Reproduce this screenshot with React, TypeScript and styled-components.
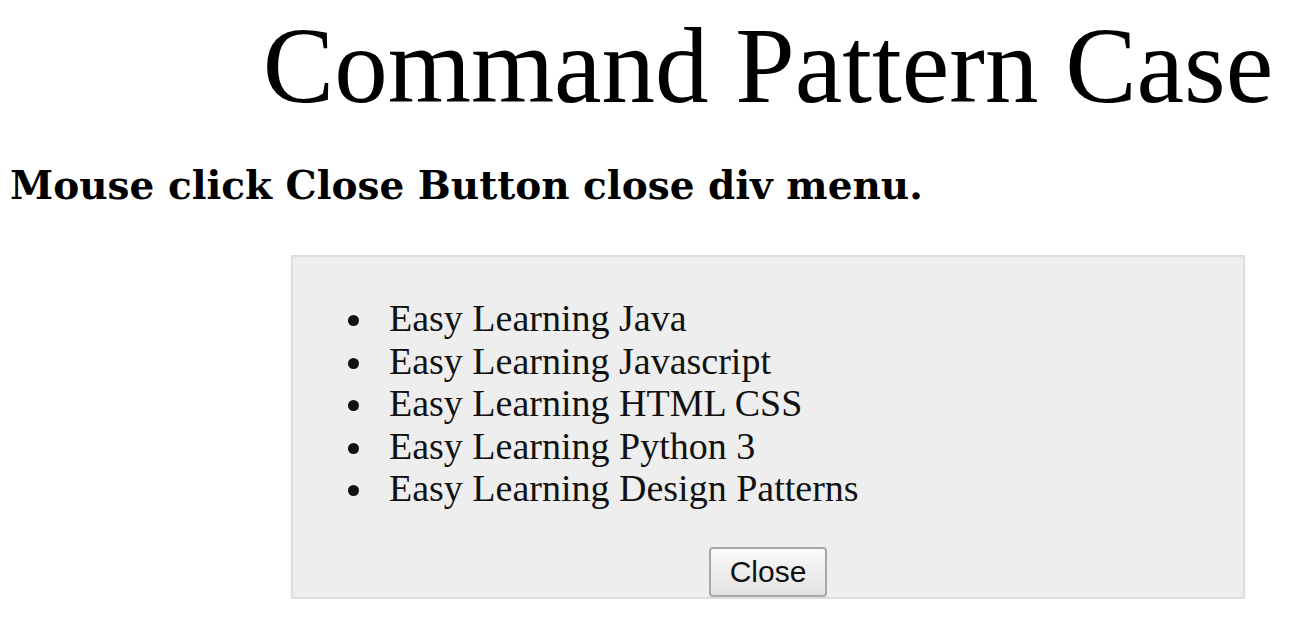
import React from "react";
import styled, { createGlobalStyle } from "styled-components";

const Global = createGlobalStyle`
  html, body { margin: 0; padding: 0; background: #ffffff; }
  body { font-family: "Liberation Serif", "Times New Roman", serif; color: #000; }
`;

const Page = styled.div`
  display: flex;
  flex-direction: column;
  width: 1312px;
`;

const Title = styled.h1`
  margin: 0;
  padding: 9px 0 0 224px;
  text-align: center;
  font-family: "Liberation Serif", "Times New Roman", serif;
  font-weight: 400;
  font-size: 107px;
  line-height: 115px;
`;

const Subtitle = styled.h2`
  margin: 0;
  padding: 37px 0 0 10px;
  font-family: "DejaVu Serif", Georgia, serif;
  font-weight: 700;
  font-size: 39px;
  line-height: 48px;
`;

const MenuWrap = styled.div`
  display: flex;
  justify-content: center;
  padding: 46px 0 0 224px;
`;

const Menu = styled.div`
  box-sizing: border-box;
  width: 954px;
  height: 344px;
  background: #eeeeee;
  border: 2px solid #dddddd;
  display: flex;
  flex-direction: column;
  align-items: center;
`;

const List = styled.ul`
  align-self: stretch;
  margin: 40px 0 0;
  padding: 0 0 0 84px;
  list-style: disc;
  font-family: "Liberation Serif", "Times New Roman", serif;
  font-size: 38px;
  line-height: 42.5px;
  color: #111;
`;

const Item = styled.li`
  padding-left: 12px;
`;

const CloseButton = styled.button`
  flex-shrink: 0;
  margin-top: 37px;
  width: 118px;
  height: 50px;
  font-family: "Liberation Sans", Arial, sans-serif;
  font-size: 30px;
  color: #111;
  background: linear-gradient(#fafafa, #e2e2e2);
  border: 2px solid #a8a8a8;
  border-radius: 4px;
  padding: 0;
`;

const items = [
  "Easy Learning Java",
  "Easy Learning Javascript",
  "Easy Learning HTML CSS",
  "Easy Learning Python 3",
  "Easy Learning Design Patterns",
];

export default function App() {
  return (
    <Page>
      <Global />
      <Title>Command Pattern Case</Title>
      <Subtitle>Mouse click Close Button close div menu.</Subtitle>
      <MenuWrap>
        <Menu>
          <List>
            {items.map((t) => (
              <Item key={t}>{t}</Item>
            ))}
          </List>
          <CloseButton>Close</CloseButton>
        </Menu>
      </MenuWrap>
    </Page>
  );
}
